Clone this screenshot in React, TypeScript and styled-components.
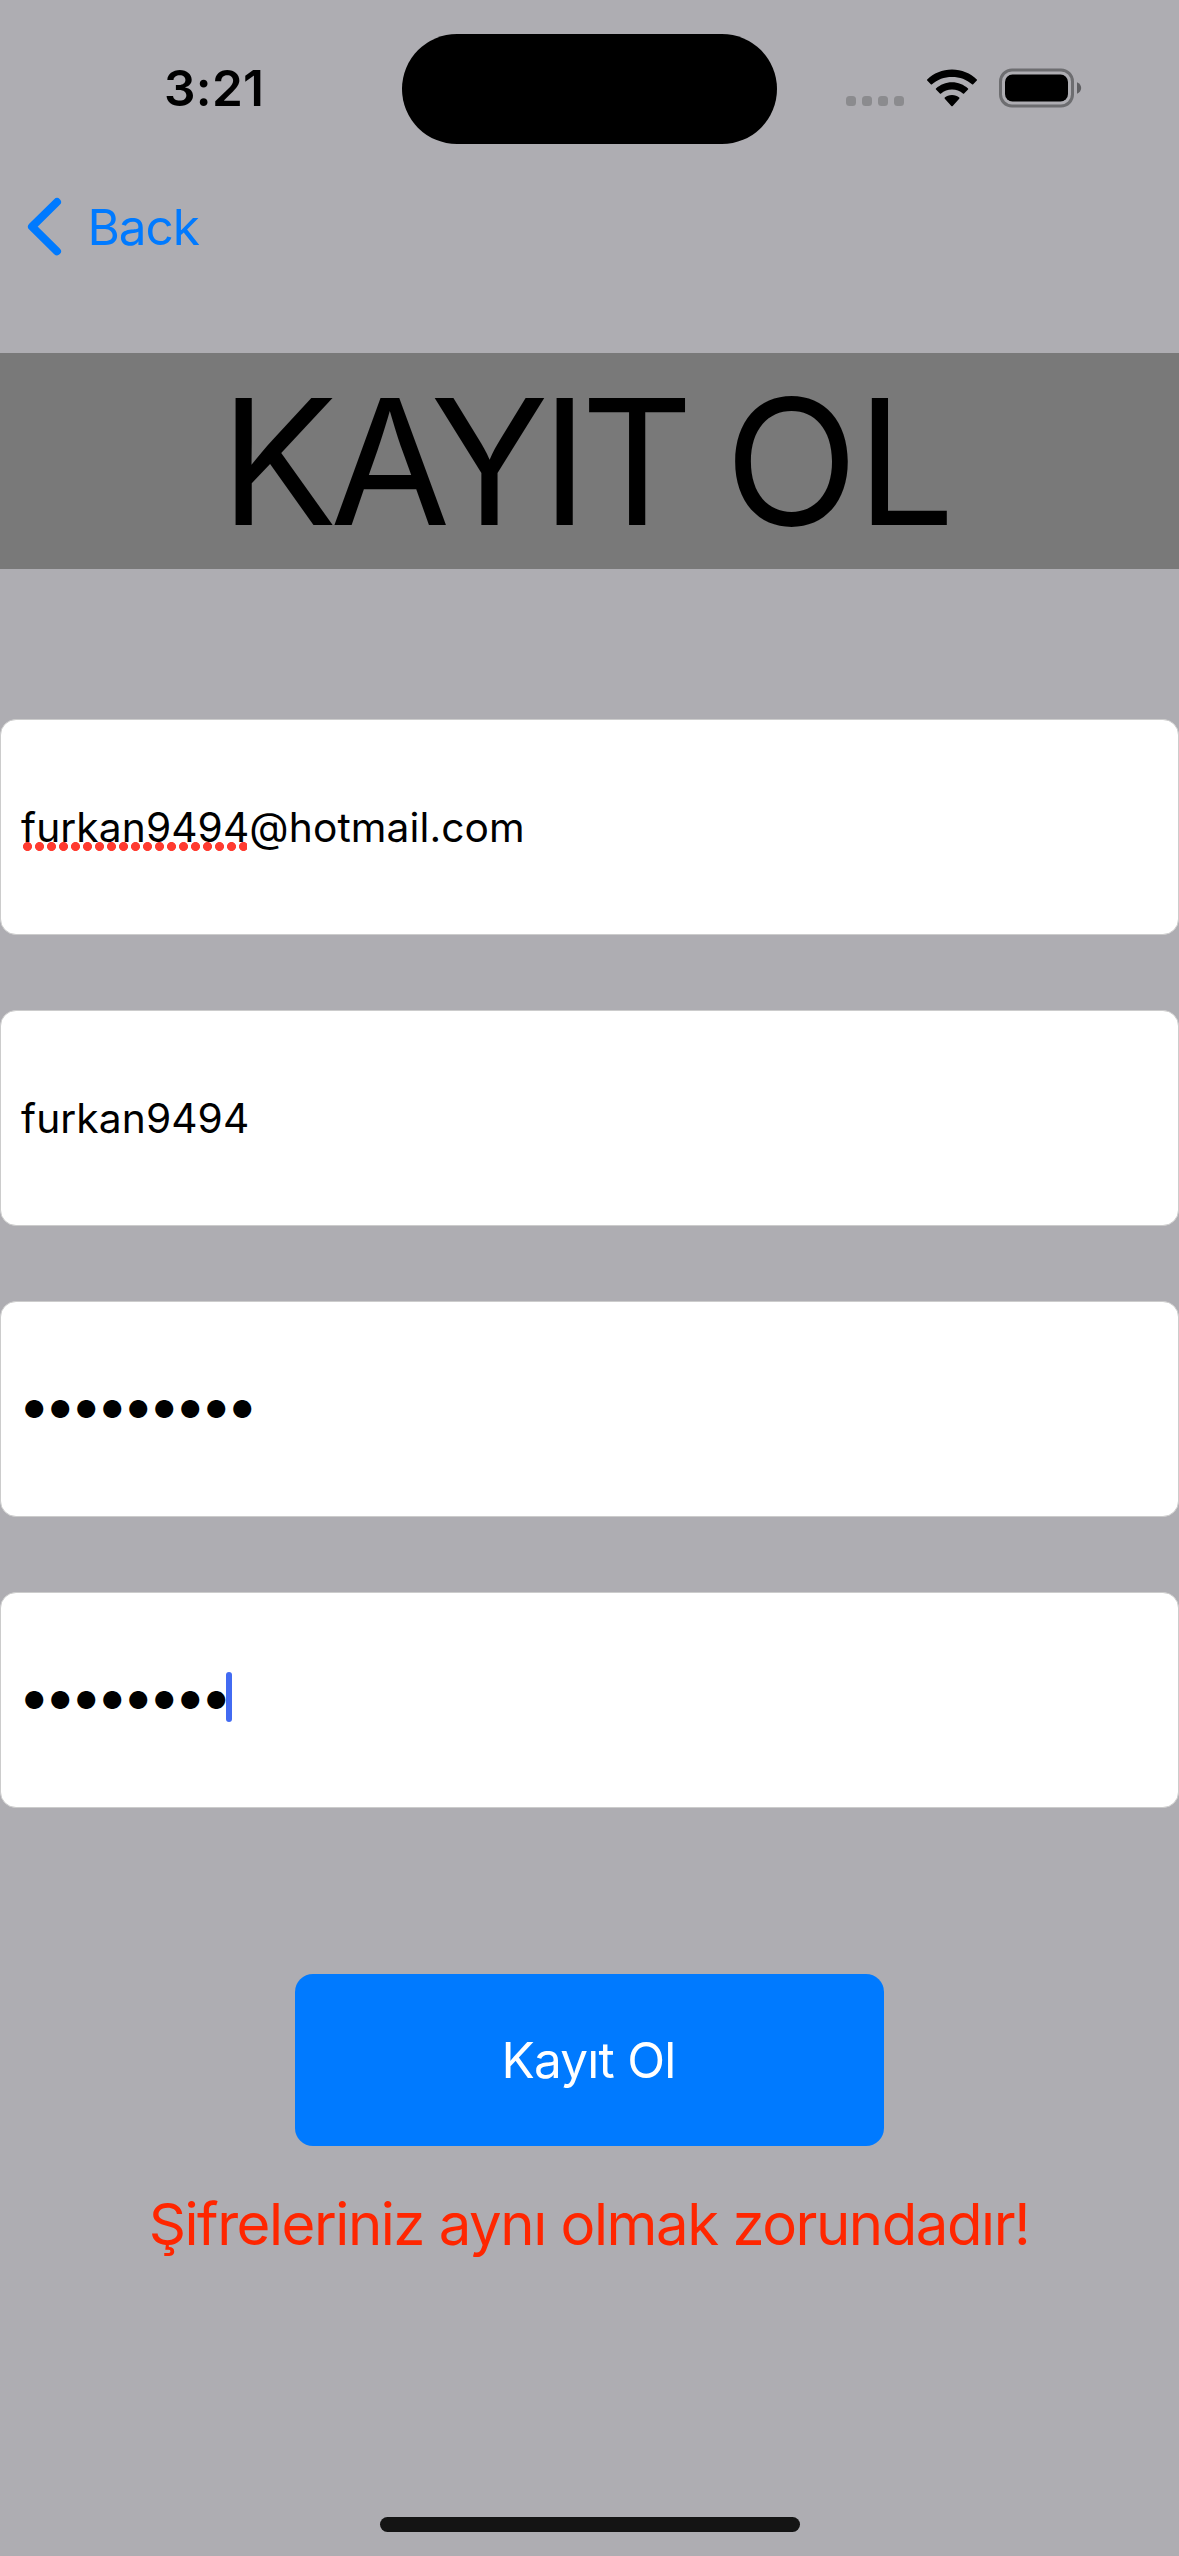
import React from 'react';
import styled, { createGlobalStyle } from 'styled-components';

const GlobalStyle = createGlobalStyle`
  * { box-sizing: border-box; }
  body {
    margin: 0;
    background: #aeadb2;
    font-family: Inter, 'Liberation Sans', sans-serif;
  }
`;

const Screen = styled.div`
  display: flex;
  flex-direction: column;
  width: 1179px;
  height: 2556px;
  background: #aeadb2;
  color: #000;
  overflow: hidden;
`;

const StatusBar = styled.header`
  display: grid;
  grid-template-columns: 402px 375px 1fr;
  height: 177px;
  padding-top: 33px;
  align-items: start;
`;

const Time = styled.div`
  padding: 0 0 0 164px;
  height: 110px;
  line-height: 110px;
  font-size: 49.5px;
  font-weight: 600;
  letter-spacing: 0.3px;
`;

const Island = styled.div`
  height: 110px;
  margin-top: 1px;
  border-radius: 55px;
  background: #000;
`;

const StatusIcons = styled.div`
  display: flex;
  align-items: center;
  height: 109px;
  padding-left: 69px;
`;

const SignalDots = styled.div`
  display: flex;
  gap: 6px;
  margin-top: 27px;
  margin-right: 21.5px;
`;

const SignalDot = styled.span`
  width: 10px;
  height: 10px;
  border-radius: 3.5px;
  background: #8b8b8e;
`;

const WifiIcon = styled.svg`
  width: 52px;
  height: 40px;
  margin-right: 21.5px;
`;

const BatteryIcon = styled.svg`
  width: 84px;
  height: 40px;
`;

const NavBar = styled.nav`
  display: flex;
  height: 132px;
  padding: 0 0 32px 26px;
  align-items: center;
`;

const BackButton = styled.button`
  display: flex;
  align-items: center;
  padding: 0;
  border: 0;
  background: none;
  color: #007aff;
  font: 400 49.5px/60px Inter, 'Liberation Sans', sans-serif;
  letter-spacing: -1.1px;
`;

const Chevron = styled.svg`
  width: 38px;
  height: 60px;
  margin-right: 23.5px;
`;

const TitleBand = styled.h1`
  display: flex;
  align-items: center;
  justify-content: center;
  height: 216px;
  margin: 44px 0 0;
  padding: 1px 5px 0 0;
  background: #797979;
  font-size: 174.5px;
  font-weight: 400;
  line-height: 1.2;
  white-space: nowrap;
`;

const Title = styled.span`
  letter-spacing: -7.4px;
  word-spacing: -3px;
`;

const TitleWord = styled.span`
  letter-spacing: -1.5px;
`;

const Form = styled.form`
  display: flex;
  flex-direction: column;
  align-items: center;
  padding-top: 150px;
`;

const Fields = styled.div`
  display: flex;
  flex-direction: column;
  gap: 75px;
  width: 100%;
`;

const Field = styled.div`
  display: flex;
  align-items: center;
  height: 216px;
  padding-left: 20px;
  border: 1px solid #cccccc;
  border-radius: 16px;
  background: #fff;
  font-size: 40.7px;
  letter-spacing: 0.1px;
`;

const Misspelled = styled.span`
  position: relative;

  &::after {
    content: '';
    position: absolute;
    left: 2px;
    bottom: 1px;
    width: 224px;
    height: 9px;
    background: radial-gradient(circle at 4.5px 4.5px, #ff3b30 4.1px, transparent 4.9px) 0 0 / 12px 9px repeat-x;
  }
`;

const Bullets = styled.span`
  padding-left: 2.2px;
  font-size: 24px;
  letter-spacing: 4.06px;
`;

const Caret = styled.span`
  width: 6px;
  height: 50px;
  margin: 0 0 7px -5px;
  border-radius: 3px;
  background: #426bf2;
`;

const SubmitButton = styled.button`
  width: 589px;
  height: 172px;
  margin-top: 166px;
  padding: 0 2px 0 0;
  border: 0;
  border-radius: 18px;
  background: #007aff;
  color: #fff;
  font: 400 49.5px/60px Inter, 'Liberation Sans', sans-serif;
  letter-spacing: -0.75px;
`;

const ErrorMessage = styled.p`
  margin: 43px 0 0;
  padding-right: 1px;
  color: #ff2600;
  font-size: 58.1px;
  line-height: 70px;
  letter-spacing: -1.47px;
  white-space: nowrap;
`;

const HomeIndicator = styled.div`
  width: 420px;
  height: 15px;
  margin: auto auto 24px;
  border-radius: 8px;
  background: #141414;
`;

export default function App() {
  return (
    <Screen>
      <GlobalStyle />
      <StatusBar>
        <Time>3:21</Time>
        <Island />
        <StatusIcons>
          <SignalDots>
            <SignalDot />
            <SignalDot />
            <SignalDot />
            <SignalDot />
          </SignalDots>
          <WifiIcon viewBox="0 0 52 40">
            <path d="M26 1.5C35.6 1.5 44.5 5.3 50.8 11.4Q51.4 12 50.8 12.6L47.2 16.3Q46.6 16.9 46 16.3C40.8 11.4 33.7 8.9 26 8.9S11.2 11.4 6 16.3Q5.4 16.9 4.8 16.3L1.2 12.6Q.6 12 1.2 11.4C7.5 5.3 16.4 1.5 26 1.5Z" />
            <path d="M26 14.2C32.2 14.2 37.8 16.6 42 20.4Q42.6 21 42 21.6L38.1 25.5Q37.5 26.1 36.9 25.5C34 22.9 30.2 21.6 26 21.6S18 22.9 15.1 25.5Q14.5 26.1 13.9 25.5L10 21.6Q9.4 21 10 20.4C14.2 16.6 19.8 14.2 26 14.2Z" />
            <path d="M26 26.9C29 26.9 31.5 27.9 33.2 29.6Q33.8 30.2 33.2 30.8L26.7 38Q26 38.7 25.3 38L18.8 30.8Q18.2 30.2 18.8 29.6C20.5 27.9 23 26.9 26 26.9Z" />
          </WifiIcon>
          <BatteryIcon viewBox="0 0 84 40">
            <rect x="1.5" y="2" width="72" height="36" rx="11.5" fill="none" stroke="#6d6d70" strokeWidth="3" />
            <rect x="6" y="6.5" width="63" height="27" rx="7.5" />
            <path d="M78 14.2C80.5 15.3 82.2 17.5 82.2 20S80.5 24.7 78 25.8Z" fill="#5f5f62" />
          </BatteryIcon>
        </StatusIcons>
      </StatusBar>
      <NavBar>
        <BackButton>
          <Chevron viewBox="0 0 38 60" fill="none" stroke="currentColor" strokeWidth="8" strokeLinecap="round" strokeLinejoin="round">
            <path d="M31 5L6 29.7L31 54.3" />
          </Chevron>
          Back
        </BackButton>
      </NavBar>
      <TitleBand>
        <Title>
          KAYIT <TitleWord>OL</TitleWord>
        </Title>
      </TitleBand>
      <Form>
        <Fields>
          <Field>
            <Misspelled>furkan9494</Misspelled>@hotmail.com
          </Field>
          <Field>furkan9494</Field>
          <Field>
            <Bullets>●●●●●●●●●</Bullets>
          </Field>
          <Field>
            <Bullets>●●●●●●●●</Bullets>
            <Caret />
          </Field>
        </Fields>
        <SubmitButton type="button">Kayıt Ol</SubmitButton>
        <ErrorMessage>Şifreleriniz aynı olmak zorundadır!</ErrorMessage>
      </Form>
      <HomeIndicator />
    </Screen>
  );
}
